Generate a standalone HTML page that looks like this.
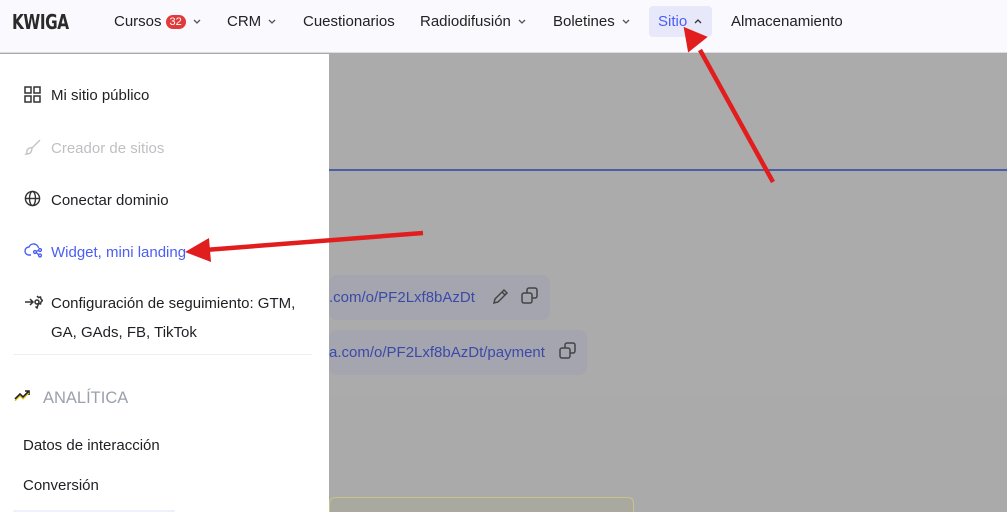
<!DOCTYPE html>
<html><head><meta charset="utf-8"><style>
*{margin:0;padding:0;box-sizing:border-box}
html,body{width:1007px;height:512px;overflow:hidden}
body{position:relative;font-family:"Liberation Sans",sans-serif;background:#aaaaaa;color:#1f1f24}
.hdr{position:absolute;left:0;top:0;width:1007px;height:53px;background:#f9f9fe;border-bottom:1px solid #dcdce4}
.hdr>span{position:absolute;top:13px;font-size:15px;color:#222;white-space:nowrap}
.logo{position:absolute;left:12px;top:10px;font-size:20px;font-weight:bold;font-family:"DejaVu Sans Condensed","Liberation Sans",sans-serif;color:#2a2a2a;letter-spacing:-0.5px;transform:scaleX(0.85);transform-origin:left}
.badge{display:inline-block;background:#e03a3a;color:#fff;font-size:11px;line-height:14px;border-radius:7px;padding:0 4px;margin-left:4px;vertical-align:1px}
.chev{display:inline-block;margin-left:7px;vertical-align:2px}
.side{position:absolute;left:0;top:54px;width:329px;height:458px;background:#fff}
.it{position:absolute;left:51px;font-size:15px;color:#1f1f24;white-space:nowrap}
.ic{position:absolute;left:24px}
.gray{position:absolute;left:329px;top:54px;width:678px;height:341px;background:#ababac}
.card{position:absolute;background:#a4a5ae;border-radius:8px;font-size:15px;color:#3b4aa8;white-space:nowrap}
</style></head><body>
<div class="hdr">
<div class="logo">KWIGA</div>
<span style="left:114px">Cursos<span class="badge">32</span><svg class="chev" width="8" height="5" viewBox="0 0 8 5" fill="none" stroke="#555" stroke-width="1.3"><path d="M1 1l3 3 3-3"/></svg></span>
<span style="left:227px">CRM<svg class="chev" width="8" height="5" viewBox="0 0 8 5" fill="none" stroke="#555" stroke-width="1.3"><path d="M1 1l3 3 3-3"/></svg></span>
<span style="left:303px">Cuestionarios</span>
<span style="left:420px">Radiodifusión<svg class="chev" width="8" height="5" viewBox="0 0 8 5" fill="none" stroke="#555" stroke-width="1.3"><path d="M1 1l3 3 3-3"/></svg></span>
<span style="left:553px">Boletines<svg class="chev" width="8" height="5" viewBox="0 0 8 5" fill="none" stroke="#555" stroke-width="1.3"><path d="M1 1l3 3 3-3"/></svg></span>
<div style="position:absolute;left:649px;top:6px;width:63px;height:31px;background:#e8e8fb;border-radius:4px"></div>
<span style="left:658px;color:#4b5ef5">Sitio<svg class="chev" width="8" height="5" viewBox="0 0 8 5" fill="none" stroke="#333" stroke-width="1.3"><path d="M1 4l3-3 3 3"/></svg></span>
<span style="left:731px">Almacenamiento</span>
</div>
<div class="gray"></div>
<div style="position:absolute;left:329px;top:169px;width:678px;height:2px;background:#4a5ea8"></div>
<div class="card" style="left:329px;top:275px;width:221px;height:45px"><span style="position:absolute;left:0;top:14px">.com/o/PF2Lxf8bAzDt</span>
<svg style="position:absolute;left:162px;top:11px" width="20" height="20" viewBox="0 0 20 20" fill="none" stroke="#444" stroke-width="1.5"><path d="M3 17l1-4 9-9 3 3-9 9z M11 6l3 3"/></svg>
<svg style="position:absolute;left:191px;top:11px" width="20" height="20" viewBox="0 0 20 20" fill="none" stroke="#444" stroke-width="1.5"><rect x="2" y="7" width="10" height="10" rx="2"/><path d="M7 7V4a2 2 0 0 1 2-2h6a2 2 0 0 1 2 2v6a2 2 0 0 1-2 2h-3"/></svg></div>
<div class="card" style="left:329px;top:330px;width:258px;height:45px"><span style="position:absolute;left:0;top:14px">a.com/o/PF2Lxf8bAzDt/payment</span>
<svg style="position:absolute;left:229px;top:11px" width="20" height="20" viewBox="0 0 20 20" fill="none" stroke="#444" stroke-width="1.5"><rect x="2" y="7" width="10" height="10" rx="2"/><path d="M7 7V4a2 2 0 0 1 2-2h6a2 2 0 0 1 2 2v6a2 2 0 0 1-2 2h-3"/></svg></div>
<div style="position:absolute;left:329px;top:497px;width:305px;height:15px;border:1px solid #c9c38a;border-bottom:none;border-radius:6px 6px 0 0;background:#aaa99f"></div>
<div class="side">
<svg class="ic" style="top:32px" width="17" height="17" viewBox="0 0 17 17" fill="none" stroke="#333" stroke-width="1.5"><rect x="1" y="1" width="6" height="6"/><rect x="10" y="1" width="6" height="6"/><rect x="1" y="10" width="6" height="6"/><rect x="10" y="10" width="6" height="6"/></svg>
<div class="it" style="top:33px">Mi sitio público</div>
<svg class="ic" style="top:84px" width="18" height="18" viewBox="0 0 18 18" fill="none" stroke="#c4c4c8" stroke-width="1.4"><path d="M16 2L8 10 M8 10c-2-1-5 1-5 3s-1 3-1 3 4 0 5-2 1-3 1-4"/></svg>
<div class="it" style="top:86px;color:#c0c0c4">Creador de sitios</div>
<svg class="ic" style="top:136px" width="17" height="17" viewBox="0 0 18 18" fill="none" stroke="#333" stroke-width="1.5"><circle cx="9" cy="9" r="7.5"/><ellipse cx="9" cy="9" rx="3.2" ry="7.5"/><path d="M1.5 9h15"/></svg>
<div class="it" style="top:138px">Conectar dominio</div>
<svg class="ic" style="top:186px" width="19" height="18" viewBox="0 0 19 18" fill="none" stroke="#4b5ef5" stroke-width="1.4"><path d="M7 15H5a4 4 0 0 1 0-8 5 5 0 0 1 9.5 1"/><circle cx="11" cy="12" r="1.4"/><circle cx="16" cy="10" r="1.4"/><circle cx="16" cy="15.5" r="1.4"/><path d="M12.3 11.4l2.4-1 M12.3 12.6l2.4 2.2"/></svg>
<div class="it" style="top:190px;color:#4b5ef5">Widget, mini landing</div>
<svg class="ic" style="top:240px" width="19" height="18" viewBox="0 0 19 18" fill="none" stroke="#333" stroke-width="1.5"><path d="M1 8h8 M6 5l3 3-3 3"/><circle cx="13" cy="8" r="2"/><path d="M13 2l1.5 1.5 2 -.5.5 2 1.5 1.5-1.5 1.5-.5 2-2-.5L13 14l-1.5-1.5"/></svg>
<div class="it" style="line-height:29px;top:235px">Configuración de seguimiento: GTM,<br>GA, GAds, FB, TikTok</div>
<div style="position:absolute;left:13px;top:300px;width:299px;height:1px;background:#eee"></div>
<svg style="position:absolute;left:14px;top:335px" width="18" height="12" viewBox="0 0 18 12" fill="none" stroke="#222" stroke-width="1.6"><path d="M1 10l5-5 3 3 6-6 M11 2h4v4"/><path d="M1 11l5-5 3 3 6-6" stroke="#e8c200" stroke-width="1" transform="translate(0,1)"/></svg>
<div style="position:absolute;left:43px;top:335px;font-size:16.5px;color:#9aa0ac">ANALÍTICA</div>
<div style="position:absolute;left:23px;top:383px;font-size:15px">Datos de interacción</div>
<div style="position:absolute;left:23px;top:423px;font-size:15px">Conversión</div>
<div style="position:absolute;left:13px;top:456px;width:162px;height:2px;background:#eef0fb;border-radius:4px"></div>
</div>
<svg style="position:absolute;left:0;top:0" width="1007" height="512">
<line x1="773" y1="182" x2="700" y2="50" stroke="#e21d1d" stroke-width="4.5"/>
<polygon points="686,26 708,40 686,52" fill="#e21d1d" transform="rotate(-10 690 40)"/>
<line x1="423" y1="233" x2="205" y2="250" stroke="#e21d1d" stroke-width="4.5"/>
<polygon points="185,252 209,238 211,262" fill="#e21d1d"/>
</svg>
</body></html>
